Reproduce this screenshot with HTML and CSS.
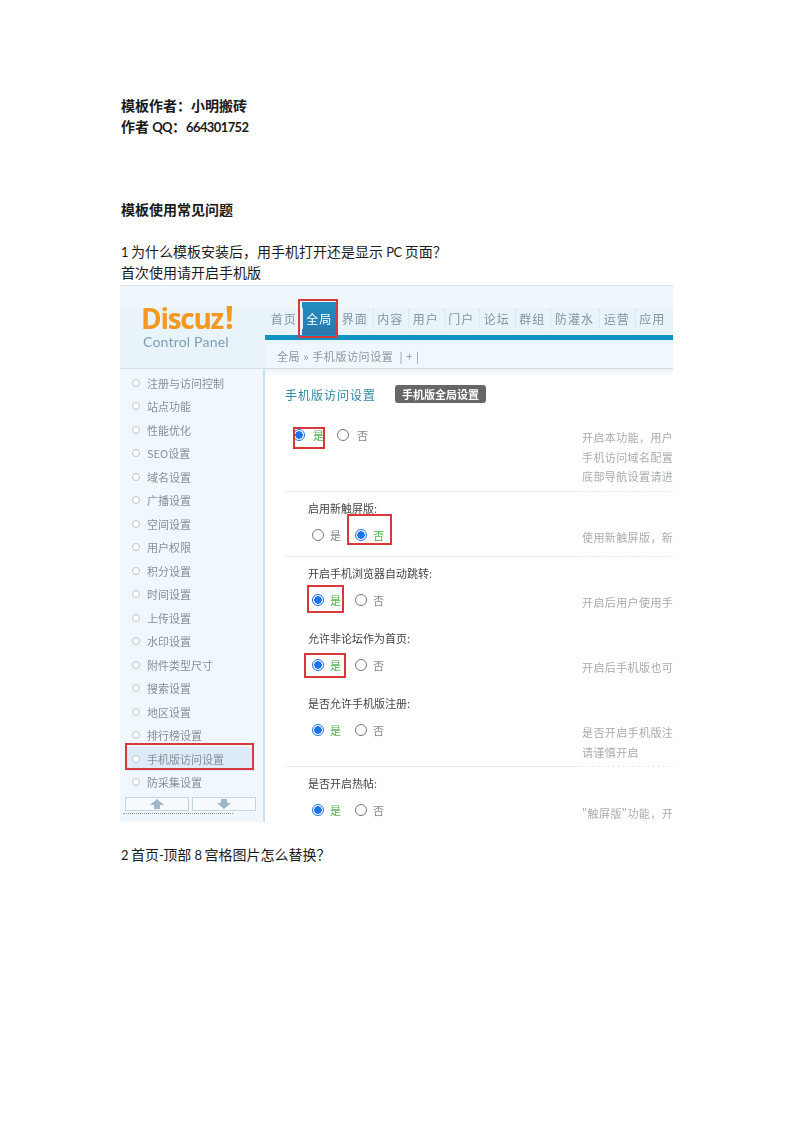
FILE: index.html
```html
<!DOCTYPE html>
<html lang="zh-CN">
<head>
<meta charset="utf-8">
<title>模板使用常见问题</title>
<link rel="stylesheet" href="styles.css">
</head>
<body>
<main class="doc">
  <p class="strong">模板作者：小明搬砖</p>
  <p class="strong">作者 <span class="lat">QQ</span>：<span class="lat">664301752</span></p>
  <p class="strong gap-big">模板使用常见问题</p>
  <p class="gap-line"><span class="lat">1</span> 为什么模板安装后，用手机打开还是显示 <span class="lat">PC</span> 页面？</p>
  <p>首次使用请开启手机版</p>

  <section class="shot">
    <header class="shot-head">
      <div class="logo">
        <div class="logo-mark">Discuz<span class="logo-bang">!</span></div>
        <div class="logo-sub">Control Panel</div>
      </div>
      <div class="head-right">
        <nav class="nav">
          <span class="nav-item">首页</span>
          <span class="nav-item nav-active">全局</span>
          <span class="nav-item">界面</span>
          <span class="nav-item">内容</span>
          <span class="nav-item">用户</span>
          <span class="nav-item">门户</span>
          <span class="nav-item">论坛</span>
          <span class="nav-item">群组</span>
          <span class="nav-item nav-wide">防灌水</span>
          <span class="nav-item">运营</span>
          <span class="nav-item">应用</span>
        </nav>
        <div class="bar"></div>
        <div class="crumb">全局 » 手机版访问设置 &nbsp;| + |</div>
      </div>
    </header>

    <div class="shot-body">
      <aside class="side">
        <ul class="menu">
          <li>注册与访问控制</li>
          <li>站点功能</li>
          <li>性能优化</li>
          <li>SEO设置</li>
          <li>域名设置</li>
          <li>广播设置</li>
          <li>空间设置</li>
          <li>用户权限</li>
          <li>积分设置</li>
          <li>时间设置</li>
          <li>上传设置</li>
          <li>水印设置</li>
          <li>附件类型尺寸</li>
          <li>搜索设置</li>
          <li>地区设置</li>
          <li>排行榜设置</li>
          <li class="menu-on">手机版访问设置</li>
          <li>防采集设置</li>
        </ul>
        <div class="scrollers">
          <span class="scroller"><svg width="14" height="10" viewBox="0 0 14 10"><path d="M7 0 14 6H10V10H4V6H0Z" fill="#9db8c9"/></svg></span>
          <span class="scroller"><svg width="14" height="10" viewBox="0 0 14 10"><path d="M4 0H10V4H14L7 10 0 4H4Z" fill="#9db8c9"/></svg></span>
        </div>
        <div class="side-foot"></div>
      </aside>

      <div class="panel">
        <div class="panel-title">
          <span class="title-text">手机版访问设置</span>
          <span class="badge">手机版全局设置</span>
        </div>

        <div class="row row-first">
          <div class="row-left">
            <div class="radios radios-wide">
              <span class="radio radio-on"></span><span class="opt opt-on">是</span>
              <span class="radio"></span><span class="opt">否</span>
            </div>
          </div>
          <div class="row-right">
            <p class="desc">开启本功能，用户使</p>
            <p class="desc">手机访问域名配置请</p>
            <p class="desc">底部导航设置请进入</p>
          </div>
        </div>

        <div class="row">
          <div class="row-left">
            <div class="label">启用新触屏版:</div>
            <div class="radios">
              <span class="radio"></span><span class="opt">是</span>
              <span class="radio radio-on"></span><span class="opt opt-on">否</span>
            </div>
          </div>
          <div class="row-right"><p class="desc">使用新触屏版，新触</p></div>
        </div>

        <div class="row row-plain">
          <div class="row-left">
            <div class="label">开启手机浏览器自动跳转:</div>
            <div class="radios">
              <span class="radio radio-on"></span><span class="opt opt-on">是</span>
              <span class="radio"></span><span class="opt">否</span>
            </div>
          </div>
          <div class="row-right"><p class="desc">开启后用户使用手机</p></div>
        </div>

        <div class="row row-plain">
          <div class="row-left">
            <div class="label">允许非论坛作为首页:</div>
            <div class="radios">
              <span class="radio radio-on"></span><span class="opt opt-on">是</span>
              <span class="radio"></span><span class="opt">否</span>
            </div>
          </div>
          <div class="row-right"><p class="desc">开启后手机版也可以</p></div>
        </div>

        <div class="row row-tall">
          <div class="row-left">
            <div class="label">是否允许手机版注册:</div>
            <div class="radios">
              <span class="radio radio-on"></span><span class="opt opt-on">是</span>
              <span class="radio"></span><span class="opt">否</span>
            </div>
          </div>
          <div class="row-right">
            <p class="desc">是否开启手机版注册</p>
            <p class="desc">请谨慎开启</p>
          </div>
        </div>

        <div class="row row-plain row-last">
          <div class="row-left">
            <div class="label">是否开启热帖:</div>
            <div class="radios">
              <span class="radio radio-on"></span><span class="opt opt-on">是</span>
              <span class="radio"></span><span class="opt">否</span>
            </div>
          </div>
          <div class="row-right"><p class="desc">"触屏版"功能，开启</p></div>
        </div>
      </div>
    </div>

    <span class="mark mark-nav"></span>
    <span class="mark mark-r1"></span>
    <span class="mark mark-r2"></span>
    <span class="mark mark-r3"></span>
    <span class="mark mark-r4"></span>
    <span class="mark mark-side"></span>
  </section>

  <p class="after-shot"><span class="lat">2</span> 首页<span class="lat">-</span>顶部 <span class="lat">8</span> 宫格图片怎么替换？</p>
</main>
</body>
</html>
```

FILE: styles.css
```css
* { box-sizing: border-box; }
html, body { margin: 0; padding: 0; background: #fff; }
body {
  font-family: "Noto Sans CJK SC", sans-serif;
  font-size: 14px;
  color: #1a1a1a;
}
p { margin: 0; }
.doc { padding: 95px 120px 0 120px; width: 793px; }
.doc > p { line-height: 21px; height: 21px; padding-left: 1px; }
.strong { font-weight: 700; }
.lat { font-family: "Lato", sans-serif; font-size: 13px; letter-spacing: -0.6px; }
.gap-big { margin-top: 62px; }
.gap-line { margin-top: 21px; }
.after-shot { margin-top: 22px; }

/* embedded screenshot */
.shot {
  position: relative;
  width: 553px;
  height: 537px;
  margin-top: 2px;
  overflow: hidden;
  background: #fff;
  font-size: 11px;
  color: #666;
  filter: blur(0.35px);
}
.shot-head {
  display: flex;
  height: 84px;
  border-top: 1px solid #dfe4e8;
  background: linear-gradient(#eff7fc 22px, #e8f3fa 22px);
}
.logo {
  width: 145px;
  flex: none;
  padding: 16px 0 0 21px;
  border-bottom: 1px solid #d3dee6;
}
.logo-mark {
  font-family: "Open Sans", sans-serif;
  font-weight: 700;
  font-size: 28px;
  line-height: 29px;
  letter-spacing: -1.3px;
  color: #f6981f;
}
.logo-bang { font-size: 32px; margin-left: 2px; }
.logo-sub {
  font-family: "Lato", sans-serif;
  font-size: 14px;
  line-height: 18px;
  margin-left: 2px;
  letter-spacing: 0.2px;
  color: #7ea0b2;
}
.head-right {
  flex: 1;
  display: flex;
  flex-direction: column;
  padding-top: 16px;
}
.nav {
  display: flex;
  height: 33px;
  padding-left: 1px;
}
.nav-item {
  position: relative;
  width: 35.5px;
  flex: none;
  text-align: center;
  line-height: 33px;
  font-size: 12px;
  letter-spacing: 1px;
  color: #7f95a3;
}
.nav-item + .nav-item::before {
  content: "";
  position: absolute;
  left: 0;
  top: 6px;
  bottom: 6px;
  border-left: 1px solid #dbe9f2;
}
.nav-wide { width: 49px; }
.nav-active {
  color: #fff;
  background: linear-gradient(#1f8ebf, #2a78ad);
}
.bar { height: 5px; background: #0f93c4; }
.crumb {
  height: 25px;
  margin-top: 4px;
  padding-left: 12px;
  line-height: 24px;
  font-size: 11px;
  letter-spacing: 0.6px;
  color: #8a969e;
  background: #f1f8fd;
  border-bottom: 1px solid #cfd9e0;
}

.shot-body { display: flex; height: 453px; }
.side {
  width: 145px;
  flex: none;
  background: #f0f8fd;
  border-right: 2px solid #cbe0ef;
}
.menu { margin: 0; padding: 2px 0 0 0; list-style: none; }
.menu li {
  display: flex;
  align-items: center;
  gap: 7px;
  height: 23.5px;
  padding-left: 12px;
  font-size: 11px;
  color: #868f95;
}
.menu li::before {
  content: "";
  width: 6px;
  height: 6px;
  border: 1px solid #bcc6cc;
  border-radius: 50%;
  background: #fff;
}
.menu .menu-on {
  margin: 0 9px 0 6px;
  padding-left: 6px;
  background: #dcebf7;
}
.scrollers { display: flex; gap: 3px; padding: 3px 0 0 5px; }
.scroller {
  display: flex;
  align-items: center;
  justify-content: center;
  width: 64px;
  height: 14px;
  background: #f8fbfd;
  border: 1px solid #c6d6e0;
}
.side-foot {
  width: 110px;
  margin: 2px 0 0 3px;
  border-top: 1px dotted #8a9198;
}

.panel {
  flex: 1;
  padding-left: 20px;
  background: linear-gradient(#f0f3f5, #fff 9px);
}
.panel-title {
  display: flex;
  align-items: center;
  gap: 19px;
  height: 51px;
  padding-bottom: 1px;
}
.title-text {
  font-size: 12px;
  letter-spacing: 1px;
  color: #2e88a8;
}
.badge {
  width: 91px;
  height: 18px;
  line-height: 18px;
  text-align: center;
  font-size: 11px;
  font-weight: 700;
  color: #fff;
  background: #666;
  border-radius: 3px;
}
.row {
  display: grid;
  grid-template-columns: 292px 1fr;
  height: 65px;
  white-space: nowrap;
}
.row-first { height: 72px; }
.row-tall { height: 80px; }
.row-left { border-bottom: 1px solid #e2edf5; }
.row-right {
  margin-right: 3px;
  padding: 36px 0 0 5px;
  border-bottom: 1px dashed #e2edf5;
}
.row-first .row-right { padding-top: 8px; }
.row-plain .row-left,
.row-plain .row-right { border-bottom: 0; }
.row-last .row-right { padding-top: 37px; }
.label {
  height: 26px;
  padding: 6px 0 0 23px;
  line-height: 20px;
  font-size: 11px;
  color: #444;
}
.radios {
  display: flex;
  align-items: center;
  height: 20px;
  margin-top: 7px;
  padding-left: 27px;
}
.radios-wide { margin-top: 5px; padding-left: 8px; }
.radio {
  width: 12px;
  height: 12px;
  flex: none;
  border: 1px solid #777;
  border-radius: 50%;
  background: #fff;
}
.radio-on {
  border-color: #1a73e8;
  background: radial-gradient(circle, #1a73e8 0 3.5px, #fff 4px);
}
.opt {
  width: 31px;
  padding-left: 6px;
  font-size: 11px;
  color: #888;
}
.opt-on { color: #4cb44c; }
.radios-wide .opt { width: 32px; padding-left: 8px; }
.desc {
  height: 19.5px;
  line-height: 19.5px;
  font-size: 11px;
  letter-spacing: 0.4px;
  color: #a8acae;
}

/* red annotation rectangles drawn over the screenshot */
.mark {
  position: absolute;
  border: 2px solid #d8383a;
  pointer-events: none;
}
.mark-nav { left: 178px; top: 14px; width: 40px; height: 39px; }
.mark-r1 { left: 173px; top: 142px; width: 32px; height: 22px; }
.mark-r2 { left: 227px; top: 229px; width: 45px; height: 31px; }
.mark-r3 { left: 187px; top: 300px; width: 37px; height: 28px; }
.mark-r4 { left: 184px; top: 368px; width: 42px; height: 25px; }
.mark-side { left: 5px; top: 458px; width: 129px; height: 27px; }
```
